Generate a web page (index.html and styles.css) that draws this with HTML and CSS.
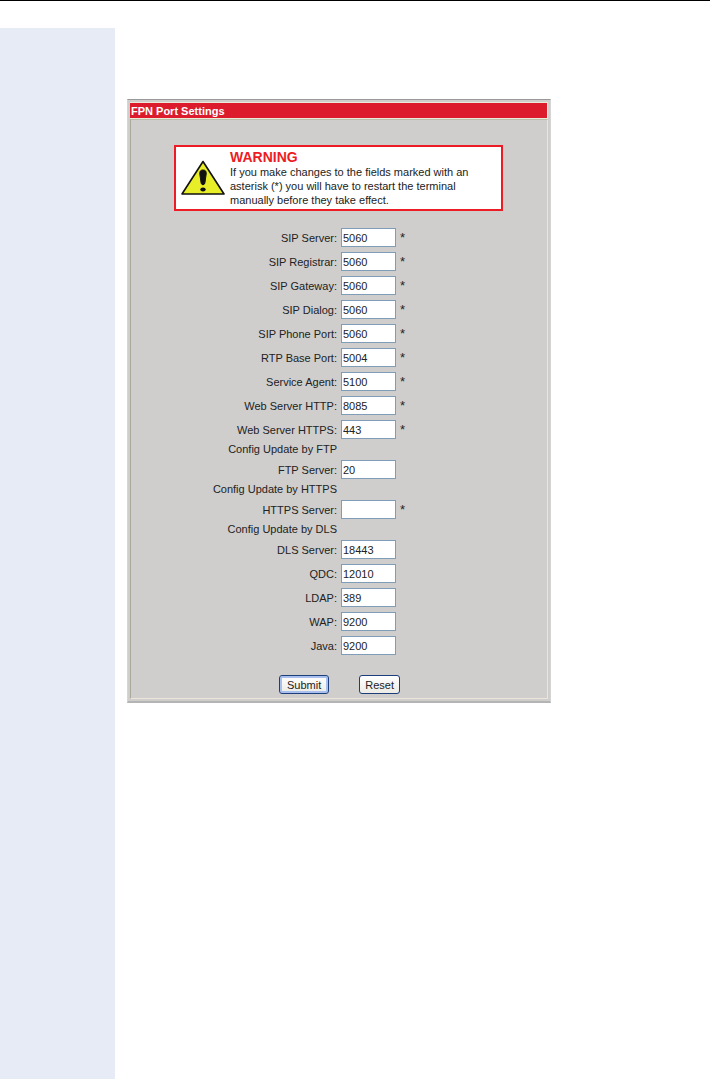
FILE: index.html
```html
<!DOCTYPE html>
<html lang="en">
<head>
  <meta charset="UTF-8">
  <meta name="viewport" content="width=device-width, initial-scale=1.0">
  <title>FPN Port Settings</title>
  <link rel="stylesheet" href="styles.css">
</head>
<body>
  <div class="page">
    <aside class="sidebar"></aside>
    <main class="content">
      <form class="panel">
        <h1>FPN Port Settings</h1>
        <div class="panel-body">
          <div class="warning">
            <svg class="warning-icon" viewBox="0 0 44 36" width="44" height="36" aria-hidden="true">
              <path d="M22 1.5 L43 34 H1 Z" fill="#e8ee28" stroke="#111" stroke-width="1.6" stroke-linejoin="round"/>
              <path d="M22 10 C19.3 10 18.6 11.5 18.8 14 L20.2 23.5 Q22 26.5 23.8 23.5 L25.2 14 C25.4 11.5 24.7 10 22 10 Z" fill="#111" stroke="#111"/>
              <ellipse cx="22" cy="29.5" rx="2.7" ry="2" fill="#111"/>
            </svg>
            <div class="warning-text">
              <h2>WARNING</h2>
              <p>If you make changes to the fields marked with an<br>asterisk (*) you will have to restart the terminal<br>manually before they take effect.</p>
            </div>
          </div>

          <div class="fields">
            <label for="sip-server">SIP Server:</label>
            <input type="text" id="sip-server" value="5060"><span>*</span>
            <label for="sip-registrar">SIP Registrar:</label>
            <input type="text" id="sip-registrar" value="5060"><span>*</span>
            <label for="sip-gateway">SIP Gateway:</label>
            <input type="text" id="sip-gateway" value="5060"><span>*</span>
            <label for="sip-dialog">SIP Dialog:</label>
            <input type="text" id="sip-dialog" value="5060"><span>*</span>
            <label for="sip-phone">SIP Phone Port:</label>
            <input type="text" id="sip-phone" value="5060"><span>*</span>
            <label for="rtp-base">RTP Base Port:</label>
            <input type="text" id="rtp-base" value="5004"><span>*</span>
            <label for="service-agent">Service Agent:</label>
            <input type="text" id="service-agent" value="5100"><span>*</span>
            <label for="web-http">Web Server HTTP:</label>
            <input type="text" id="web-http" value="8085"><span>*</span>
            <label for="web-https">Web Server HTTPS:</label>
            <input type="text" id="web-https" value="443"><span>*</span>

            <h3>Config Update by FTP</h3>
            <label for="ftp-server">FTP Server:</label>
            <input type="text" id="ftp-server" value="20">

            <h3>Config Update by HTTPS</h3>
            <label for="https-server">HTTPS Server:</label>
            <input type="text" id="https-server" value=""><span>*</span>

            <h3>Config Update by DLS</h3>
            <label for="dls-server">DLS Server:</label>
            <input type="text" id="dls-server" value="18443">
            <label for="qdc">QDC:</label>
            <input type="text" id="qdc" value="12010">
            <label for="ldap">LDAP:</label>
            <input type="text" id="ldap" value="389">
            <label for="wap">WAP:</label>
            <input type="text" id="wap" value="9200">
            <label for="java">Java:</label>
            <input type="text" id="java" value="9200">
          </div>

          <div class="buttons">
            <button type="submit" class="submit-btn">Submit</button>
            <button type="reset">Reset</button>
          </div>
        </div>
      </form>
    </main>
  </div>
</body>
</html>
```
FILE: styles.css
```css
* {
  box-sizing: border-box;
}
body {
  margin: 0;
  background: #fff;
  color: #222;
  font-family: "Liberation Sans", Arial, sans-serif;
  font-size: 11px;
  border-top: 1px solid #000;
}
h1, h2, h3, p {
  margin: 0;
}
.page {
  display: flex;
  min-height: calc(100vh - 1px);
  padding-top: 27px;
}
.sidebar {
  width: 115px;
  flex-shrink: 0;
  background: #e7ebf6;
}
.content {
  flex: 1;
  padding: 71px 12px 40px;
}
.panel {
  max-width: 424px;
  padding: 2px;
  background: #cfcecd;
  border: 1px solid #d5d5d5;
  border-top-color: #999;
  border-bottom: 2px solid #b4b4b4;
}
h1 {
  height: 17px;
  padding-left: 1px;
  border: 1px solid #ece9d8;
  border-left: none;
  background: #dc1c2c;
  color: #fff;
  font-size: 11px;
  line-height: 16px;
}
.panel-body {
  padding: 25px 44px 4px 43px;
  border: 1px solid #ece6d8;
  border-left-color: #aaa89a;
  border-top-color: #b8bca8;
}
.warning {
  display: flex;
  align-items: center;
  height: 66px;
  padding: 0 5px;
  gap: 5px;
  background: #fff;
  border: 2px solid #ed1c24;
}
.warning-icon {
  flex-shrink: 0;
}
.warning-text {
  line-height: 14px;
  white-space: nowrap;
}
.warning h2 {
  color: #ed1c24;
  font-size: 14px;
  line-height: 16px;
}
.fields {
  display: grid;
  grid-template-columns: 163px 55px 1fr;
  gap: 5px 4px;
  margin-top: 17px;
}
.fields label {
  grid-column: 1;
  line-height: 20px;
  height: 19px;
  text-align: right;
}
.fields input {
  grid-column: 2;
  width: 55px;
  height: 19px;
  padding: 0 1px;
  border: 1px solid #7f9db9;
  background: #fff;
  color: #222;
  font: inherit;
}
.fields span {
  grid-column: 3;
  height: 19px;
  line-height: 20px;
  font-size: 13px;
}
.fields h3 {
  grid-column: 1;
  height: 11px;
  font-size: 11px;
  font-weight: normal;
  line-height: 11px;
  text-align: right;
}
.buttons {
  display: flex;
  gap: 30px;
  margin-top: 20px;
  padding-left: 105px;
}
button {
  height: 19px;
  padding: 0 5px;
  border: 1px solid #1c3f7c;
  border-radius: 3px;
  background: linear-gradient(#fff, #ecebe5);
  color: #222;
  font: inherit;
}
.submit-btn {
  padding: 0 7px;
  box-shadow: inset 0 0 0 2px #a9c0ee;
}
```
